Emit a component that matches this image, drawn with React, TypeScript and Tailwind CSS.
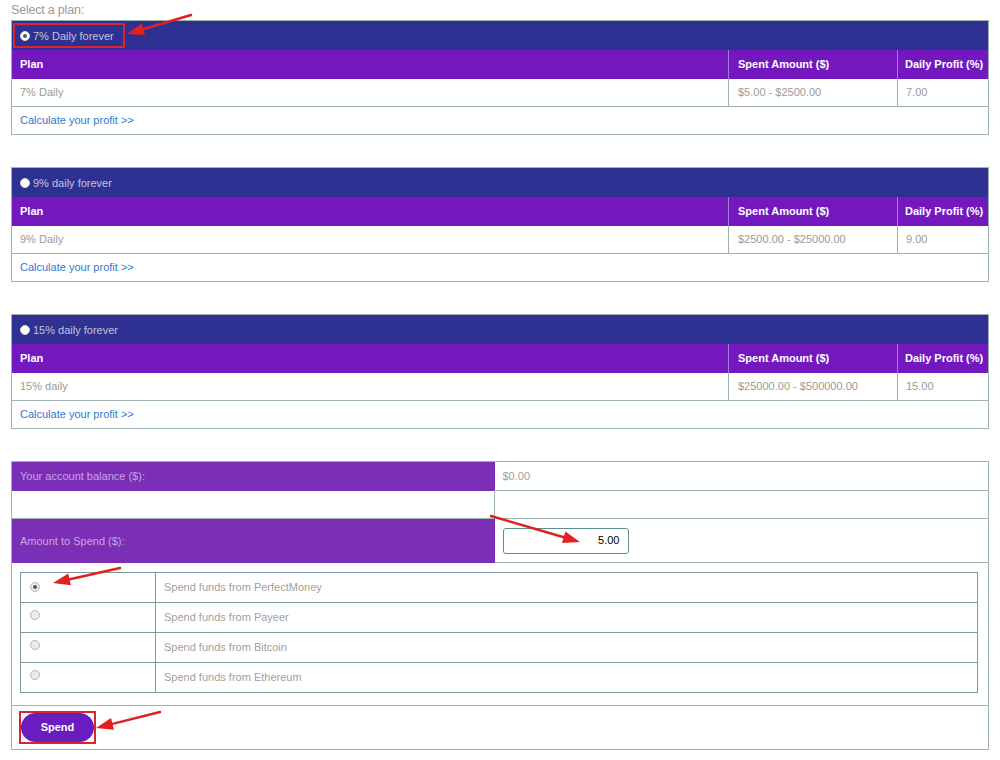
import React from "react";

type Plan = {
  title: string;
  name: string;
  range: string;
  profit: string;
  selected?: boolean;
};

const plans: Plan[] = [
  { title: "7% Daily forever", name: "7% Daily", range: "$5.00 - $2500.00", profit: "7.00", selected: true },
  { title: "9% daily forever", name: "9% Daily", range: "$2500.00 - $25000.00", profit: "9.00" },
  { title: "15% daily forever", name: "15% daily", range: "$25000.00 - $500000.00", profit: "15.00" },
];

const methods = ["PerfectMoney", "Payeer", "Bitcoin", "Ethereum"];

function Radio({ checked, dark }: { checked?: boolean; dark?: boolean }) {
  return (
    <span
      className={
        "inline-flex h-[10px] w-[10px] shrink-0 items-center justify-center rounded-full border " +
        (dark ? "border-[#d8d8e8] bg-white" : "border-[#b5b5b5] bg-[#ececec]")
      }
    >
      {checked && <span className="h-[4px] w-[4px] rounded-full bg-[#555]" />}
    </span>
  );
}

function PlanTable({ plan }: { plan: Plan }) {
  return (
    <table className="w-full table-fixed border-collapse border border-[#9fb2b2] text-[11px]">
      <colgroup>
        <col className="w-[717px]" />
        <col className="w-[169px]" />
        <col className="w-[91px]" />
      </colgroup>
      <tbody>
        <tr className="h-[29px] bg-[#2e3192]">
          <td colSpan={3} className="px-[1px] pt-[1px]">
            {plan.selected ? (
              <span className="inline-flex h-[25px] items-center gap-[3px] border-2 border-[#d9262c] pl-[5px] pr-[9px] text-[#c2c4da]">
                <Radio checked dark />
                {plan.title}
              </span>
            ) : (
              <span className="inline-flex h-[25px] items-center gap-[3px] pl-[7px] text-[#c2c4da]">
                <Radio dark />
                {plan.title}
              </span>
            )}
          </td>
        </tr>
        <tr className="h-[29px] bg-[#7318bf] font-bold text-white">
          <td className="px-[8px]">Plan</td>
          <td className="border-l border-[#9d7fd4] px-[9px]">Spent Amount ($)</td>
          <td className="whitespace-nowrap border-l border-[#9d7fd4] px-[7px]">Daily Profit (%)</td>
        </tr>
        <tr className="h-[28px] text-[#9a9a9a]">
          <td className="px-[8px]">{plan.name}</td>
          <td className="border-l border-[#9fb2b2] px-[9px]">{plan.range}</td>
          <td className="border-l border-[#9fb2b2] px-[8px]">{plan.profit}</td>
        </tr>
        <tr className="h-[28px] border-t border-[#9fb2b2]">
          <td colSpan={3} className="px-[8px] text-[#2b7bd4]">
            Calculate your profit &gt;&gt;
          </td>
        </tr>
      </tbody>
    </table>
  );
}

function SpendTable() {
  return (
    <table className="w-full table-fixed border-collapse border border-[#9fb2b2] text-[11px]">
      <colgroup>
        <col className="w-[483px]" />
        <col className="w-[494px]" />
      </colgroup>
      <tbody>
        <tr className="h-[29px]">
          <td className="bg-[#7b2fb6] px-[8px] text-[#c6a6e2]">Your account balance ($):</td>
          <td className="border-b border-[#9fb2b2] px-[8px] text-[#a0a0a0]">$0.00</td>
        </tr>
        <tr className="h-[28px] border-b border-[#9fb2b2]">
          <td className="border-r border-[#9fb2b2]" />
          <td />
        </tr>
        <tr className="h-[44px]">
          <td className="bg-[#7b2fb6] px-[8px] text-[#c6a6e2]">Amount to Spend ($):</td>
          <td className="border-b border-[#9fb2b2] px-[8px]">
            <div className="flex h-[26px] w-[126px] items-center justify-end rounded-[3px] border border-[#5d8d8d] pr-[8px] text-black">
              5.00
            </div>
          </td>
        </tr>
        <tr className="h-[142px] border-b border-[#9fb2b2]">
          <td colSpan={2} className="px-[8px] pt-[9px] pb-[12px] align-top">
            <table className="w-[958px] table-fixed border-collapse border border-[#7f9a9a]">
              <colgroup>
                <col className="w-[135px]" />
                <col />
              </colgroup>
              <tbody>
                {methods.map((m, i) => (
                  <tr key={m} className="h-[30px] border-b border-[#7f9a9a]">
                    <td className="border-r border-[#7f9a9a] pl-[9px] pt-[7px] align-top leading-none">
                      <Radio checked={i === 0} />
                    </td>
                    <td className="px-[8px] text-[#a0a0a0]">Spend funds from {m}</td>
                  </tr>
                ))}
              </tbody>
            </table>
          </td>
        </tr>
        <tr className="h-[44px]">
          <td colSpan={2} className="px-[7px]">
            <span className="inline-flex border-2 border-[#d9262c]">
              <button className="h-[29px] w-[73px] rounded-full bg-[#6b1cbf] text-[11px] font-bold text-white">
                Spend
              </button>
            </span>
          </td>
        </tr>
      </tbody>
    </table>
  );
}

function Arrow({ x1, y1, x2, y2 }: { x1: number; y1: number; x2: number; y2: number }) {
  const dx = x2 - x1;
  const dy = y2 - y1;
  const len = Math.hypot(dx, dy);
  const ux = dx / len;
  const uy = dy / len;
  const head = 17;
  const half = 6;
  const bx = x2 - ux * head;
  const by = y2 - uy * head;
  const px = -uy;
  const py = ux;
  const pts = `${x2},${y2} ${bx + px * half},${by + py * half} ${bx - px * half},${by - py * half}`;
  return (
    <g>
      <line x1={x1} y1={y1} x2={bx + ux * 2} y2={by + uy * 2} stroke="#e0211f" strokeWidth={2.5} strokeLinecap="round" />
      <polygon points={pts} fill="#e0211f" />
    </g>
  );
}

export default function App() {
  return (
    <div className="relative min-h-[760px] w-[1000px] bg-white font-['Liberation_Sans',Arial,sans-serif]">
      <div className="w-[988px] pl-[11px]">
        <div className="h-[20px] text-[12.5px] leading-[20px] tracking-[-0.2px] text-[#9a9a9a]">
          Select a plan:
        </div>
        <div className="flex flex-col gap-[32px]">
          {plans.map((p) => (
            <PlanTable key={p.title} plan={p} />
          ))}
          <SpendTable />
        </div>
      </div>
      <svg className="pointer-events-none absolute inset-0" width={1000} height={760}>
        <Arrow x1={191} y1={15} x2={127} y2={34} />
        <Arrow x1={491} y1={516} x2={580} y2={542} />
        <Arrow x1={120} y1={568} x2={53} y2={583} />
        <Arrow x1={160} y1={712} x2={96} y2={728} />
      </svg>
    </div>
  );
}
